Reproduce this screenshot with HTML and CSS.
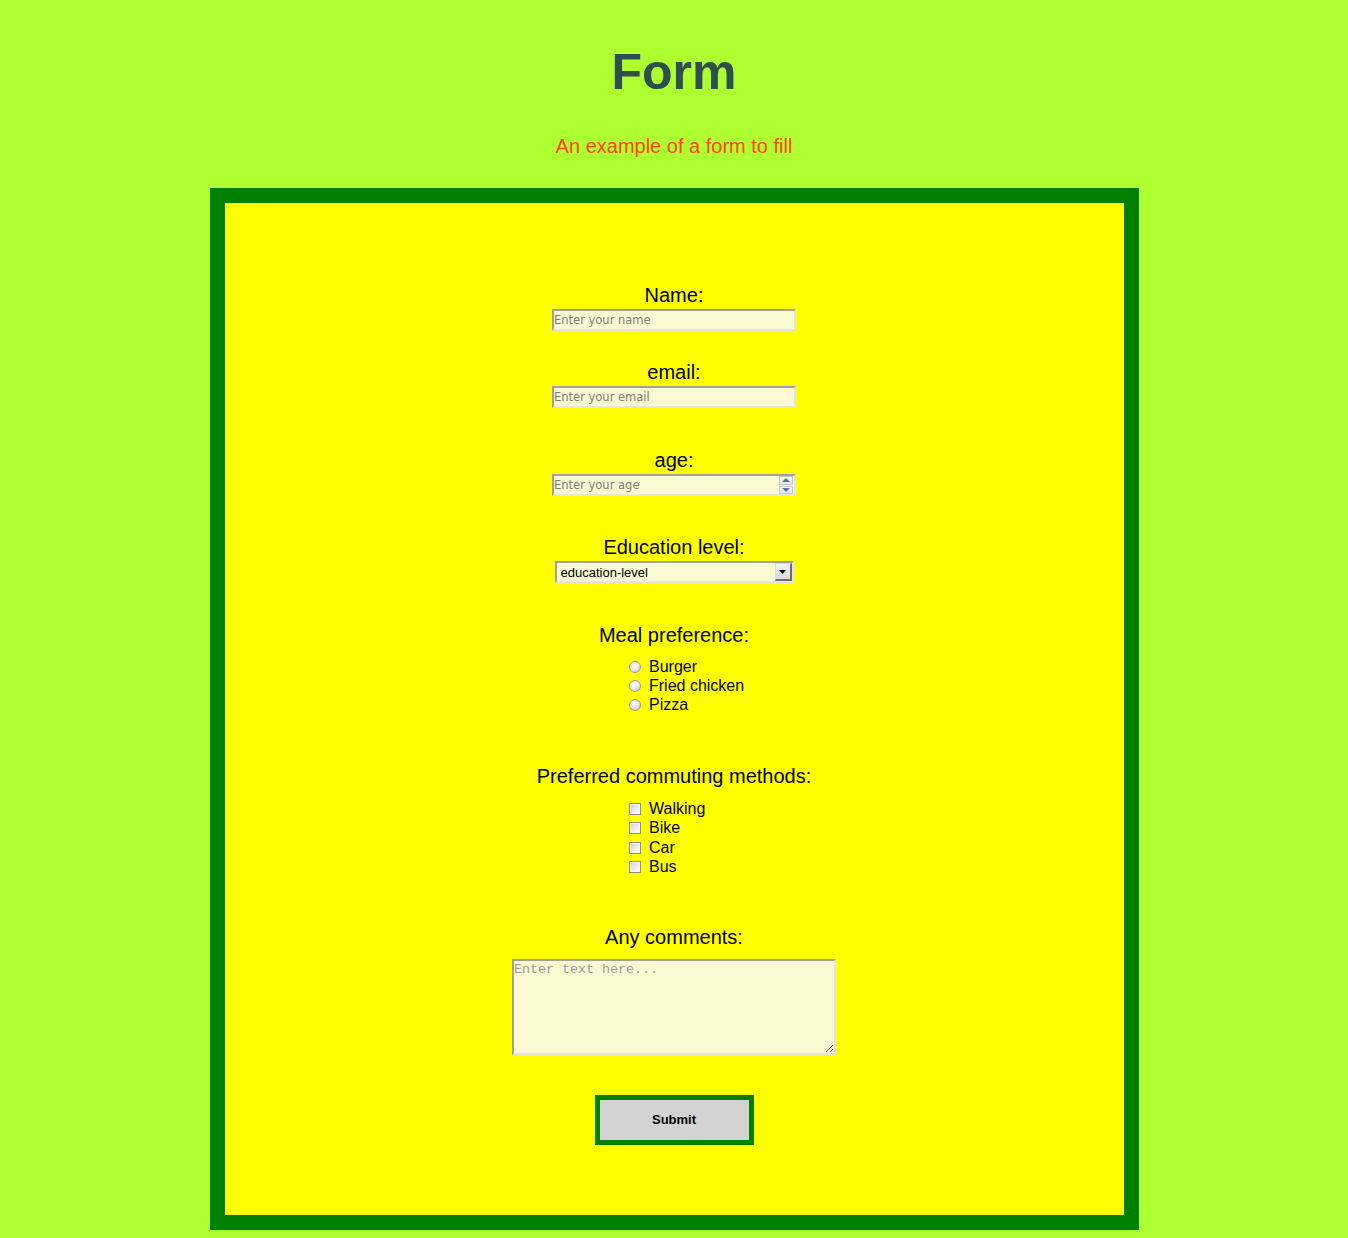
FILE: index.html
```html
<!DOCTYPE html>
<html lang="en">
<head>
<meta charset="utf-8">
<title>Form</title>
<link rel="stylesheet" href="styles.css">
</head>
<body>
<header class="hero">
  <h1 class="title">Form</h1>
  <p class="subtitle">An example of a form to fill</p>
</header>
<form class="survey">
  <label class="label label-first" for="name">Name:</label>
  <input class="text-input" id="name" type="text" placeholder="Enter your name">

  <label class="label label-email" for="email">email:</label>
  <input class="text-input" id="email" type="email" placeholder="Enter your email">

  <label class="label label-wide" for="age">age:</label>
  <div class="spin-wrap">
    <input class="text-input number-input" id="age" type="number" placeholder="Enter your age">
    <span class="spinner" aria-hidden="true">
      <span class="spin-btn"><svg width="8" height="4" viewBox="0 0 8 4"><path d="M0 4 L4 0 L8 4 Z" fill="#5b6fb0"/></svg></span>
      <span class="spin-btn"><svg width="8" height="4" viewBox="0 0 8 4"><path d="M0 0 L8 0 L4 4 Z" fill="#5b6fb0"/></svg></span>
    </span>
  </div>

  <label class="label label-edu" for="edu">Education level:</label>
  <div class="select-wrap">
    <select class="select" id="edu">
      <option>education-level</option>
      <option>High school</option>
      <option>Bachelor</option>
      <option>Master</option>
    </select>
    <span class="select-arrow" aria-hidden="true"><svg width="7" height="4" viewBox="0 0 7 4"><path d="M0 0 L7 0 L3.5 4 Z" fill="#000"/></svg></span>
  </div>

  <p class="label label-wide">Meal preference:</p>
  <div class="options options-radio">
    <label class="option"><input class="radio" type="radio" name="meal"><span>Burger</span></label>
    <label class="option"><input class="radio" type="radio" name="meal"><span>Fried chicken</span></label>
    <label class="option"><input class="radio" type="radio" name="meal"><span>Pizza</span></label>
  </div>

  <p class="label label-group">Preferred commuting methods:</p>
  <div class="options options-check">
    <label class="option"><input class="check" type="checkbox"><span>Walking</span></label>
    <label class="option"><input class="check" type="checkbox"><span>Bike</span></label>
    <label class="option"><input class="check" type="checkbox"><span>Car</span></label>
    <label class="option"><input class="check" type="checkbox"><span>Bus</span></label>
  </div>

  <label class="label label-comments" for="comments">Any comments:</label>
  <textarea class="comments" id="comments" placeholder="Enter text here..."></textarea>

  <button class="submit" type="submit">Submit</button>
</form>
</body>
</html>
```

FILE: styles.css
```css
html, body {
  margin: 0;
  padding: 0;
}

body {
  background: #adff2f;
  font-family: "Liberation Sans", Arial, sans-serif;
  color: #000;
  padding-bottom: 8px;
}

.hero {
  text-align: center;
  padding-top: 47px;
}

.title {
  margin: 0;
  font-size: 50px;
  line-height: 50px;
  font-weight: bold;
  color: #2f4f4f;
}

.subtitle {
  margin: 37px 0 0;
  font-size: 20px;
  line-height: 24px;
  color: #ff4500;
}

.survey {
  box-sizing: border-box;
  width: 929px;
  margin: 30px auto 0;
  border: 15px solid #008000;
  background: #ffff00;
  padding: 80px 0 70px;
  display: flex;
  flex-direction: column;
  align-items: center;
}

.label {
  display: block;
  margin: 29px 0 2px;
  font-size: 20px;
  line-height: 24px;
  text-align: center;
}

.label-first { margin-top: 0; }
.label-email { margin-top: 29px; }
.label-wide { margin-top: 40px; }
.label-edu { margin-top: 39px; }
.label-group { margin-top: 49px; margin-bottom: 0; }
.label-comments { margin-top: 48px; margin-bottom: 10px; }

.text-input {
  box-sizing: border-box;
  width: 244px;
  height: 22px;
  margin: 0;
  padding: 0;
  border-style: solid;
  border-width: 2px;
  border-color: #a0a0a0 #e3e3e3 #e3e3e3 #a0a0a0;
  background: #fafad2;
  font-family: "DejaVu Sans", Verdana, sans-serif;
  font-size: 11.5px;
  color: #000;
  outline: none;
}

.text-input::placeholder {
  color: #7c7c7c;
}

.number-input {
  -moz-appearance: textfield;
  appearance: textfield;
}

.number-input::-webkit-inner-spin-button,
.number-input::-webkit-outer-spin-button {
  -webkit-appearance: none;
  margin: 0;
}

.spin-wrap {
  position: relative;
  width: 244px;
  height: 22px;
}

.spinner {
  position: absolute;
  top: 2px;
  right: 3px;
  width: 14px;
  height: 18px;
  display: flex;
  flex-direction: column;
  gap: 1px;
}

.spin-btn {
  flex: 1;
  box-sizing: border-box;
  border: 1px solid #c8c8c8;
  background: linear-gradient(#f7f7f7, #e6e6e6);
  display: flex;
  align-items: center;
  justify-content: center;
}

.select-wrap {
  position: relative;
  width: 239px;
  height: 22px;
}

.select {
  -webkit-appearance: none;
  appearance: none;
  box-sizing: border-box;
  width: 239px;
  height: 22px;
  margin: 0;
  padding: 0 0 0 4px;
  border-style: solid;
  border-width: 2px;
  border-color: #a0a0a0 #e3e3e3 #e3e3e3 #a0a0a0;
  border-radius: 0;
  background: #fafad2;
  font-family: "Liberation Sans", Arial, sans-serif;
  font-size: 13px;
  color: #000;
  outline: none;
}

.select-arrow {
  position: absolute;
  top: 2px;
  right: 2px;
  width: 17px;
  height: 18px;
  box-sizing: border-box;
  border-style: solid;
  border-width: 1px 2px 2px 1px;
  border-color: #dcdcdc #6e6e6e #6e6e6e #dcdcdc;
  background: linear-gradient(#f2f2f2, #dadada);
  display: flex;
  align-items: center;
  justify-content: center;
  pointer-events: none;
}

.options {
  box-sizing: border-box;
  width: 244px;
  display: flex;
  flex-direction: column;
}

.options-radio {
  margin-top: 8px;
  padding-left: 77px;
}

.options-check {
  margin-top: 11.5px;
  padding-left: 77px;
}

.option {
  display: flex;
  align-items: center;
  height: 19.33px;
  font-size: 16px;
  white-space: nowrap;
}

.radio {
  -webkit-appearance: none;
  appearance: none;
  box-sizing: border-box;
  width: 12px;
  height: 12px;
  margin: 0 8px 0 0;
  border: 1px solid #9a9a9a;
  border-radius: 50%;
  background: radial-gradient(circle at 40% 35%, #ffffff 0, #e9e9e9 45%, #c4c4c4 100%);
}

.check {
  -webkit-appearance: none;
  appearance: none;
  box-sizing: border-box;
  width: 12px;
  height: 12px;
  margin: 0 8px 0 0;
  border: 1px solid #8e8e8e;
  border-radius: 0;
  background: linear-gradient(135deg, #cfcfcf 0%, #ececec 55%, #ffffff 100%);
  box-shadow: inset 0 0 0 1px #f4f4f4;
}

.comments {
  box-sizing: border-box;
  width: 324px;
  height: 96px;
  margin: 0;
  padding: 1px 0;
  border-style: solid;
  border-width: 2px;
  border-color: #a0a0a0 #e3e3e3 #e3e3e3 #a0a0a0;
  background: #fafad2;
  font-family: "Liberation Mono", "Courier New", monospace;
  font-size: 13.33px;
  color: #000;
  outline: none;
}

.comments::placeholder {
  color: #9a9a9a;
}

.submit {
  box-sizing: border-box;
  width: 159px;
  height: 50px;
  margin: 40px 0 0;
  padding: 0;
  border: 5px solid #008000;
  background: #d3d3d3;
  font-family: "Liberation Sans", Arial, sans-serif;
  font-size: 13px;
  font-weight: bold;
  color: #000;
  cursor: pointer;
}
```
